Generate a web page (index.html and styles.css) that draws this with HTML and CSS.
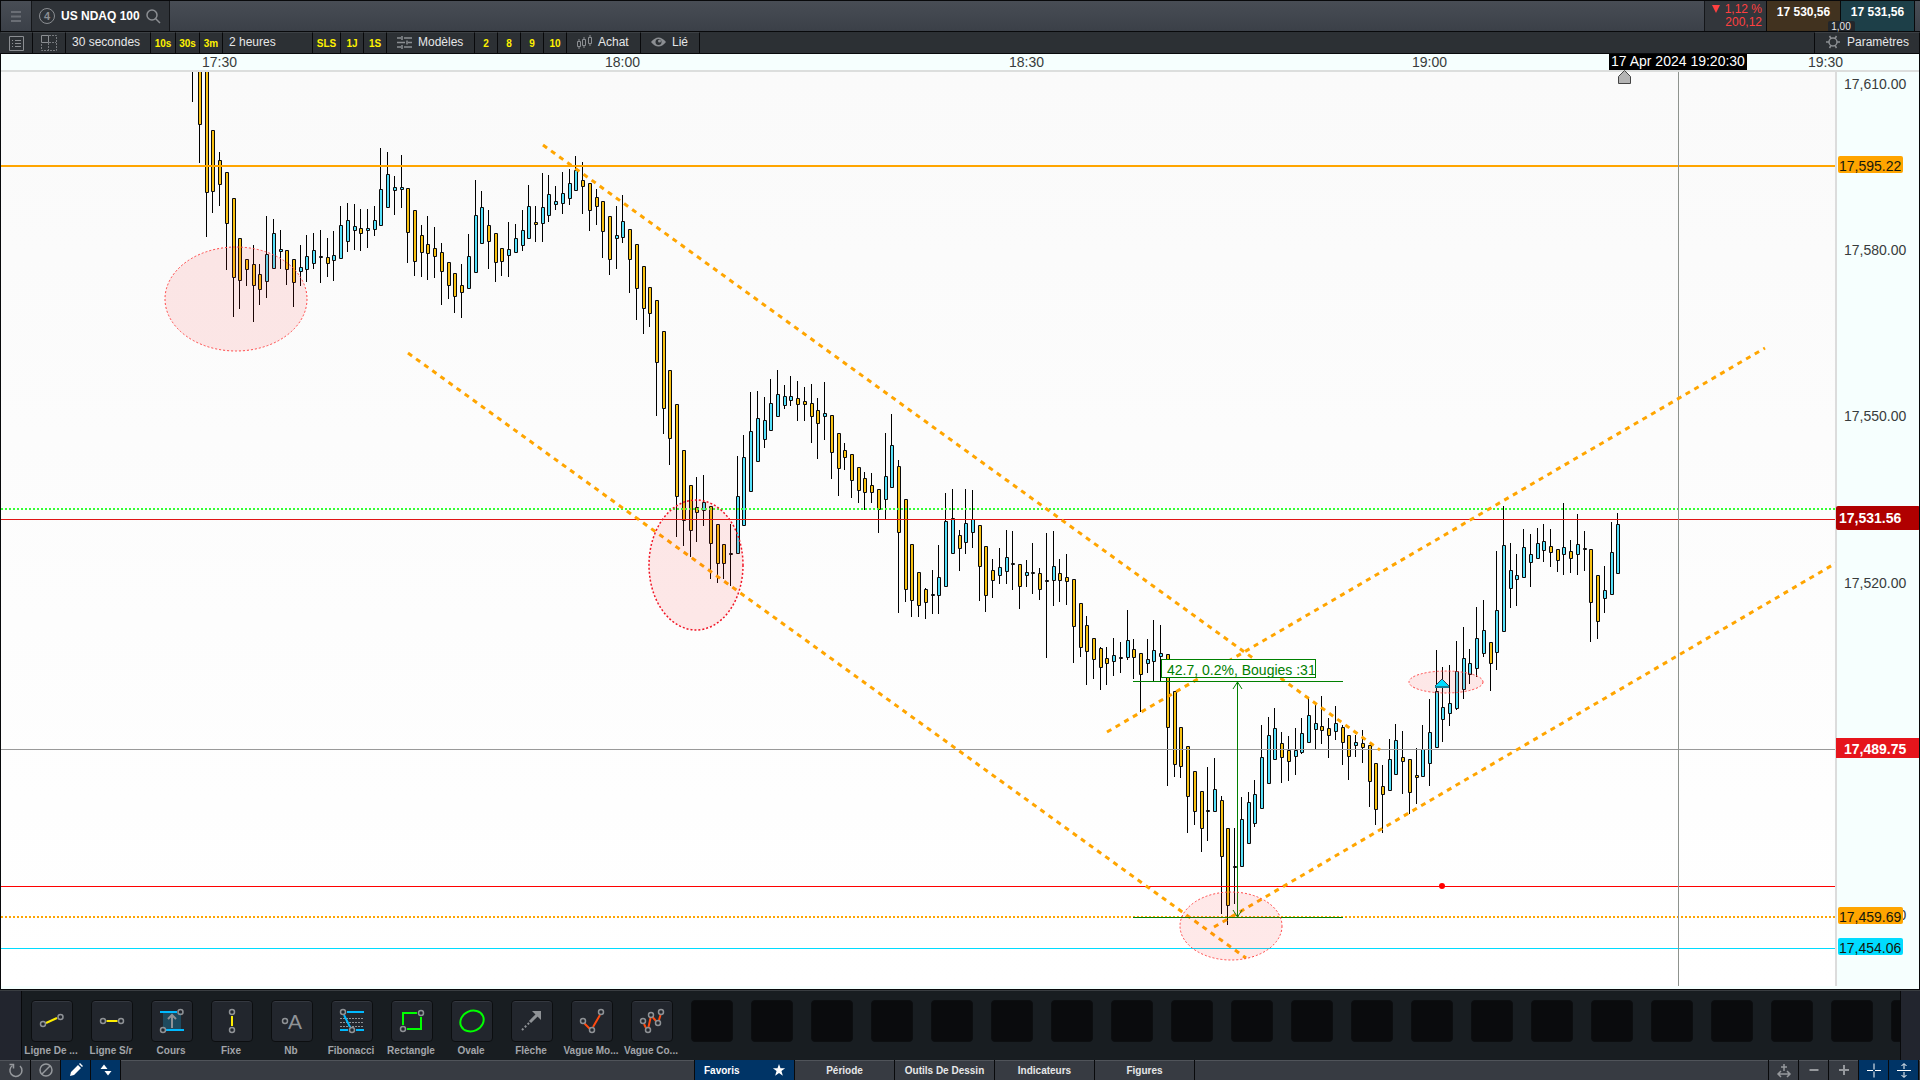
FILE: index.html
```html
<!DOCTYPE html>
<html lang="fr">

<head>
    <meta charset="UTF-8">
    <title>US NDAQ 100</title>
    <link rel="stylesheet" href="styles.css">
</head>

<body>
    <header class='topbar'>
        <button class='menu' aria-label='Menu'>
            <svg width="10" height="11" viewBox="0 0 10 11"><path d="M0 1h10M0 5.500h10M0 10h10" stroke="#6a6e75" stroke-width="2" /></svg>
        </button>
        <button class='symbol'>
            <svg width="16" height="16" viewBox="0 0 16 16">
                <circle cx="8" cy="8" r="7.500" fill="none" stroke="#8b8e92" />
                <text x="8" y="12" text-anchor="middle" class='symbol-num'>4</text>
            </svg>
            <span>US NDAQ 100</span>
            <svg width="15" height="15" viewBox="0 0 15 15" fill="none" stroke="#8b8e92" stroke-width="1.500"><circle cx="6" cy="6" r="5" /><path d="M9.500 9.500L14 14" /></svg>
        </button>
        <div class='spacer'></div>
        <div class='change'>
            <span><span class='tri'></span>1,12 %</span>
            <span>200,12</span>
        </div>
        <div class='quotes'>
            <button class='quote sell'>17 530,56</button>
            <button class='quote buy'>17 531,56</button>
            <span class='spread'>1,00</span>
        </div>
    </header>

    <nav class='toolbar'>
        <button class='ic w32' aria-label='Liste'>
            <svg width="15" height="15" viewBox="0 0 15 15" fill="none" stroke="#8b8e92"><path d="M.5.500h14v14h-14z" /><path d="M3 4.500h1M6 4.500h6M3 7.500h1M6 7.500h6M3 10.500h1M6 10.500h6" /></svg>
        </button>
        <button class='ic w33' aria-label='Disposition'>
            <svg width="16" height="16" viewBox="0 0 16 16" fill="none" stroke="#8b8e92"><path d="M.5.500h7v7h-7z" /><path d="M8 .5h7.500v15H.5V8M7.500 8v7M8 7.500h7" stroke-dasharray="2 1" stroke="#777a7e" /></svg>
        </button>
        <button class='period w85'>30 secondes</button>
        <button class='hot w25'>10s</button>
        <button class='hot w24'>30s</button>
        <button class='hot w23'>3m</button>
        <button class='period w90'>2 heures</button>
        <button class='hot w28'>SLS</button>
        <button class='hot w23'>1J</button>
        <button class='hot w23'>1S</button>
        <button class='w88'>
            <svg width="15" height="13" viewBox="0 0 15 13" stroke="#8b8e92" stroke-width="1.500"><path d="M0 2h4M7 2h8M0 6.500h8M11 6.500h4M0 11h4M7 11h8M5 0v4M10 4.500v4M5 9v4" /></svg>
            Modèles
        </button>
        <button class='hot w23'>2</button>
        <button class='hot w23'>8</button>
        <button class='hot w23'>9</button>
        <button class='hot w23'>10</button>
        <button class='w74'>
            <svg width="15" height="14" viewBox="0 0 15 14" fill="none" stroke="#8b8e92"><path d="M.5 6.500h3v5h-3zM5.500 4.500h3v6h-3zM11.500 2.500h3v6h-3zM2 4v2M2 12v2M7 2v2M7 11v2M13 0v2M13 9v2" /></svg>
            Achat
        </button>
        <button class='w59'>
            <svg width="15" height="10" viewBox="0 0 15 10"><path d="M0 5Q7.500-4 15 5Q7.500 14 0 5z" fill="#8b8e92" /><circle cx="7.500" cy="5" r="3" fill="#2c3034" /><circle cx="8.500" cy="4" r="1.500" fill="#8b8e92" /></svg>
            Lié
        </button>
        <div class='spacer'></div>
        <button class='settings'>
            <svg width="14" height="14" viewBox="0 0 14 14" fill="none" stroke="#8b8e92" stroke-width="1.500"><circle cx="7" cy="7" r="4" /><path d="M11 7h3M0 7h3M9 3.500L10.500 1M5 3.500L3.500 1M9 10.500l1.500 2.500M5 10.500L3.500 13" /></svg>
            Paramètres
        </button>
    </nav>

    <main class='chart'>
        <svg viewBox="0 54 1920 935">
            <defs>
                <linearGradient id="sky" x1="0" y1="0" x2="0" y2="1">
                    <stop offset="0" stop-color="#fafafa" />
                    <stop offset="1" stop-color="#ffffff" />
                </linearGradient>
                <clipPath id="plot"><rect x="0" y="72" width="1835" height="914" /></clipPath>
            </defs>
            <rect x="0" y="54" width="1920" height="935" fill="#f6fffe" />
            <rect x="0" y="72" width="1835" height="914" fill="url(#sky)" />
            <rect x="0" y="70" width="1920" height="2" fill="#dcdedd" />
            <rect x="1835" y="72" width="2" height="914" fill="#dcdcdc" />

            <!-- time axis -->
            <g class='axis'>
                <text x="202" y="67">17:30</text>
                <text x="605" y="67">18:00</text>
                <text x="1009" y="67">18:30</text>
                <text x="1412" y="67">19:00</text>
                <text x="1808" y="67">19:30</text>
            </g>

            <!-- price axis -->
            <g class='axis'>
                <text x="1844" y="89">17,610.00</text>
                <text x="1844" y="255">17,580.00</text>
                <text x="1844" y="421">17,550.00</text>
                <text x="1844" y="588">17,520.00</text>
                <text x="1844" y="920">17,460.00</text>
            </g>

            <g clip-path="url(#plot)">
                <g id="candles"></g>

                <!-- levels -->
                <rect x="0" y="165" width="1836" height="2" fill="orange" />
                <line x1="1" y1="509" x2="1836" y2="509" class='dots' stroke="#33ff33" />
                <rect x="0" y="519" width="1836" height="1" fill="#e01515" />
                <rect x="0" y="749" width="1836" height="1" fill="#999" />
                <rect x="0" y="886" width="1836" height="1" fill="#f00" />
                <circle cx="1442" cy="886" r="3" fill="#f00" />
                <line x1="1" y1="917" x2="1836" y2="917" class='dots' stroke="orange" />
                <rect x="0" y="948" width="1836" height="1" fill="#00dcff" />
                <rect x="1678" y="72" width="1" height="914" fill="#8e938e" />

                <!-- channels -->
                <g class='trend'>
                    <path d="M543 145L1380 750" />
                    <path d="M408 353L1246 958" />
                    <path d="M1107 732L1765 348" />
                    <path d="M1214 927L1836 563" />
                </g>

                <!-- measure -->
                <g class='measure'>
                    <path d="M1133 681.500h210M1133 917.500h210M1237.500 682v235" />
                    <path d="M1233 689l4.500-7 4.500 7M1233 910l4.500 7 4.500-7" />
                    <rect x="1161.500" y="659.500" width="154" height="18" />
                    <text x="1167" y="675">42.7, 0.2%, Bougies :31</text>
                </g>

                <g class='zone'>
                    <ellipse cx="236" cy="299" rx="71" ry="52" />
                    <ellipse cx="696" cy="565" rx="47" ry="65" class='strong' />
                    <ellipse cx="1231" cy="926" rx="51" ry="34" />
                    <ellipse cx="1446" cy="682" rx="37" ry="11" />
                </g>

                <path d="M1442 679l6.500 6.500v2h-13v-2z" fill="#00dcff" />
                <path d="M1435 686l7-7 7 7" fill="none" stroke="#345" />
                <rect x="1435" y="686" width="14" height="2" fill="#147d96" />
            </g>

            <path d="M1624.500 70.500l6 6v7h-12v-7z" fill="#b4b4b4" stroke="#444" />
            <rect x="1609" y="54" width="138" height="16" fill="#000" />
            <text x="1611" y="66" class='now'>17 Apr 2024 19:20:30</text>

            <!-- price tags -->
            <g class='tags'>
                <rect x="1838" y="156" width="65" height="17" rx="2" fill="orange" />
                <text x="1839" y="171">17,595.22</text>
                <rect x="1838" y="907" width="65" height="17" rx="2" fill="orange" />
                <text x="1839" y="922">17,459.69</text>
                <rect x="1838" y="938" width="65" height="17" rx="2" fill="#00dcff" />
                <text x="1839" y="953">17,454.06</text>
                <rect x="1836" y="506" width="84" height="24" rx="2" fill="#b00000" />
                <text x="1839" y="523" class='live'>17,531.56</text>
                <rect x="1836" y="738" width="84" height="20" fill="#e6151c" />
                <text x="1844" y="754" class='live'>17,489.75</text>
            </g>
        </svg>
    </main>

    <section class='tools'>
        <div class='grip left'></div>
        <div class='list' id='list'>
            <div class='tool'>
                <button id='t1'><svg viewBox="0 0 42 42"><path class='y' d="M15 23l11-5" /><circle cx="12" cy="24" r="2.500" /><circle cx="29.500" cy="17" r="2.500" /></svg></button>
                <label for='t1'>Ligne De ...</label>
            </div>
            <div class='tool'>
                <button id='t2'><svg viewBox="0 0 42 42"><path class='y' d="M15.500 21h11" /><circle cx="12" cy="21" r="2.500" /><circle cx="30" cy="21" r="2.500" /></svg></button>
                <label for='t2'>Ligne S/r</label>
            </div>
            <div class='tool'>
                <button id='t3'><svg viewBox="0 0 42 42"><path d="M12 13h18v16H12z" fill="#1e4a5e" stroke="none" /><path class='b' d="M9 12h17M15 30h18" /><circle cx="29.500" cy="12" r="2.500" /><circle cx="12" cy="30" r="2.500" /><path d="M21 28V15M17 19l4-4 4 4" stroke-width="2" /></svg></button>
                <label for='t3'>Cours</label>
            </div>
            <div class='tool'>
                <button id='t4'><svg viewBox="0 0 42 42"><path class='y' d="M21 16v10" /><circle cx="21" cy="12" r="2.500" /><circle cx="21" cy="30" r="2.500" /></svg></button>
                <label for='t4'>Fixe</label>
            </div>
            <div class='tool'>
                <button id='t5'><svg viewBox="0 0 42 42"><circle cx="14" cy="21" r="2.500" /><text x="17" y="29">A</text></svg></button>
                <label for='t5'>Nb</label>
            </div>
            <div class='tool'>
                <button id='t6'><svg viewBox="0 0 42 42"><path d="M9 18.500h24M9 22.500h24M9 26.500h24" stroke-width="1" stroke-dasharray="2 1" /><path class='b' d="M16 12h17M9 30h8M25 30h8M13 15l6 12" /><circle cx="12" cy="12" r="2.500" /><circle cx="21" cy="30" r="2.500" /></svg></button>
                <label for='t6'>Fibonacci</label>
            </div>
            <div class='tool'>
                <button id='t7'><svg viewBox="0 0 42 42"><path class='g' d="M26 13H12v12M16 29h14V17" /><circle cx="30" cy="13" r="2.500" /><circle cx="12" cy="29" r="2.500" /></svg></button>
                <label for='t7'>Rectangle</label>
            </div>
            <div class='tool'>
                <button id='t8'><svg viewBox="0 0 42 42"><ellipse class='g' cx="21" cy="21" rx="12" ry="10" transform="rotate(-25 21 21)" /></svg></button>
                <label for='t8'>Ovale</label>
            </div>
            <div class='tool'>
                <button id='t9'><svg viewBox="0 0 42 42"><path d="M11 30l8-8" stroke-width="2" stroke-dasharray="2 2" /><path d="M19 22l9-9" stroke-width="3" /><path d="M21 11h9v9z" fill="#8f9296" stroke="none" /></svg></button>
                <label for='t9'>Flèche</label>
            </div>
            <div class='tool'>
                <button id='t10'><svg viewBox="0 0 42 42"><path class='r' d="M13.500 23.500l5 5M22 27l7-12" /><circle cx="12" cy="21" r="2.500" /><circle cx="21" cy="30" r="2.500" /><circle cx="30" cy="12" r="2.500" /></svg></button>
                <label for='t10'>Vague Mo...</label>
            </div>
            <div class='tool'>
                <button id='t11'><svg viewBox="0 0 42 42"><path class='r' d="M13 24l2 4M17.500 27l2-9M21.500 17l3.500 4M28 20l1.500-5" /><circle cx="12" cy="21" r="2.500" /><circle cx="17" cy="30" r="2.500" /><circle cx="20" cy="15" r="2.500" /><circle cx="27" cy="23" r="2.500" /><circle cx="30" cy="12" r="2.500" /></svg></button>
                <label for='t11'>Vague Co...</label>
            </div>
        </div>
        <div class='grip right'></div>
    </section>

    <footer class='bottombar'>
        <button class='sq' aria-label='Rétablir'><svg viewBox="0 0 16 16"><path d="M4.500 3.500a6 6 0 1 0 7.500.5" /><path d="M1.500 2.500h4v4" /></svg></button>
        <button class='sq' aria-label='Effacer'><svg viewBox="0 0 16 16"><circle cx="8" cy="8" r="6" /><path d="M4 12L12 4" /></svg></button>
        <button class='sq on' aria-label='Dessiner'><svg viewBox="0 0 16 16"><path d="M2 14l1-4 7-7 3 3-7 7zM11 2l1-1 3 3-1 1z" fill="#fff" stroke="none" /></svg></button>
        <button class='sq on' aria-label='Déplacer'><svg viewBox="0 0 16 16"><path d="M2.500 7L6 2.500 9.500 7zM6.500 9h7L10 13.500z" fill="#fff" stroke="none" /></svg></button>
        <div class='spacer'></div>
        <button class='tab on'>Favoris<svg viewBox="0 0 16 16"><path d="M8 1l1.700 5H15l-4.200 3.200L12.400 14.500 8 11.300 3.600 14.500 5.200 9.200 1 6h5.300z" fill="#fff" /></svg></button>
        <button class='tab'>Période</button>
        <button class='tab'>Outils De Dessin</button>
        <button class='tab'>Indicateurs</button>
        <button class='tab last'>Figures</button>
        <div class='spacer'></div>
        <button class='sq' aria-label='Ajuster'><svg viewBox="0 0 16 16"><path d="M8 2v7M5 5h6M3 12h10M5 9l-3 3 3 3M11 9l3 3-3 3" /></svg></button>
        <button class='sq' aria-label='Zoom arrière'><svg viewBox="0 0 16 16"><path d="M3.500 8h9" stroke-width="2" /></svg></button>
        <button class='sq' aria-label='Zoom avant'><svg viewBox="0 0 16 16"><path d="M3 8h10M8 3v10" stroke-width="2" /></svg></button>
        <button class='sq on' aria-label='Réticule'><svg viewBox="0 0 16 16"><path d="M1 8.500h6M9 8.500h6M8 1.500v6M8 9.500v6" /></svg></button>
        <button class='sq on' aria-label='Hauteur'><svg viewBox="0 0 16 16"><path d="M1 8.500h14M8 2v5M8 10v5M5.500 4L8 1.500 10.500 4M5.500 13l2.500 2.500 2.500-2.500" /></svg></button>
    </footer>

    <script src="chart.js"></script>
</body>

</html>
```
FILE: styles.css
```css
html,
body {
    padding: 0;
    margin: 0;
}

body {
    min-height: 100vh;
    display: flex;
    flex-direction: column;
    background: #08090b;
    font: 12px "Liberation Sans", Arial, sans-serif;
    color: #e6e7e8;
    user-select: none;
}

button {
    display: flex;
    align-items: center;
    box-sizing: border-box;
    margin: 0;
    padding: 0;
    border: 0;
    background: none;
    color: inherit;
    font: inherit;
    white-space: nowrap;
}

.spacer {
    flex: 1;
}

/* top bar */
.topbar {
    display: flex;
    height: 31px;
    box-sizing: border-box;
    margin-bottom: 1px;
    border-top: 1px solid #08090b;
    border-left: 1px solid #08090b;
    background: linear-gradient(#484d55, #3b4048);
}

.menu {
    width: 31px;
    justify-content: center;
    border-right: 1px solid #15171a;
}

.symbol {
    width: 138px;
    gap: 6px;
    padding-left: 7px;
    border-right: 1px solid #15171a;
    background: #2f3338;
    font-weight: bold;
    color: #fff;
}

.symbol-num {
    font: bold 11px "Liberation Sans", Arial, sans-serif;
    fill: #8b8e92;
}

.change {
    width: 62px;
    box-sizing: border-box;
    padding-top: 2px;
    padding-right: 4px;
    border-left: 1px solid #15171a;
    background: #32363b;
    color: #ff4040;
    font-size: 12px;
    line-height: 13px;
    text-align: right;
}

.change > span {
    display: block;
}

.tri {
    display: inline-block;
    margin-right: 5px;
    border: 4px solid transparent;
    border-top: 8px solid #ff4040;
    border-bottom: 0;
}

.quotes {
    display: flex;
    gap: 1px;
    position: relative;
    margin-right: 5px;
    background: #08090b;
    border-left: 1px solid #08090b;
    border-right: 1px solid #08090b;
}

.quote {
    width: 73px;
    padding-bottom: 8px;
    justify-content: center;
    font-weight: bold;
    color: #fff;
}

.sell {
    background: #41321f;
}

.buy {
    background: #1d3f48;
}

.spread {
    position: absolute;
    left: 50%;
    bottom: 0;
    width: 27px;
    height: 10px;
    margin-left: -13px;
    border-radius: 2px 2px 0 0;
    background: #22262b;
    font-size: 10px;
    line-height: 11px;
    text-align: center;
}

/* toolbar */
.toolbar {
    display: flex;
    height: 22px;
    box-sizing: border-box;
    padding-left: 1px;
    border-bottom: 1px solid #08090b;
    background: #2c3034;
}

.toolbar button {
    gap: 6px;
    padding-left: 8px;
    padding-bottom: 2px;
    border-right: 1px solid #08090b;
    border-top: 1px solid #3c4044;
}

.toolbar .ic,
.toolbar .hot {
    justify-content: center;
    padding: 0;
}

.toolbar .period {
    padding-left: 6px;
}

.toolbar .hot {
    font-size: 10px;
    font-weight: bold;
    color: #fff200;
}

.w23 { width: 23px; }
.w24 { width: 24px; }
.w25 { width: 25px; }
.w28 { width: 28px; }
.w32 { width: 32px; }
.w33 { width: 33px; }
.w59 { width: 59px; }
.w74 { width: 74px; }
.w85 { width: 85px; }
.w88 { width: 88px; }
.w90 { width: 90px; }

.toolbar .w88,
.toolbar .w74,
.toolbar .w59 {
    padding-left: 10px;
}

.toolbar .settings {
    width: 106px;
    gap: 7px;
    padding-left: 11px;
    border-left: 1px solid #08090b;
}

/* chart */
.chart {
    flex: 1;
    border-left: 1px solid #08090b;
    border-right: 1px solid #08090b;
    overflow: hidden;
}

.chart svg {
    display: block;
    width: calc(100% + 2px);
    margin-left: -1px;
    font: 14px "Liberation Sans", Arial, sans-serif;
}

.axis text {
    fill: #383c3c;
}

.tags text {
    fill: #14180c;
}

.now {
    fill: #fff;
}

.tags .live {
    fill: #fff;
    font-weight: bold;
}

.dots {
    stroke-width: 2;
    stroke-dasharray: 2 2;
}

.trend path {
    fill: none;
    stroke: orange;
    stroke-width: 3;
    stroke-dasharray: 5 5;
}

.measure path,
.measure rect {
    fill: none;
    stroke: #008000;
}

.measure rect {
    fill: #fff;
}

.measure text {
    fill: #008000;
}

.zone ellipse {
    fill: rgba(255, 40, 40, .1);
    stroke: #ff4545;
    stroke-dasharray: 2 2;
}

.zone .strong {
    stroke: #f01525;
    stroke-width: 1.5;
}

.wick {
    fill: #000;
}

.body {
    fill: #0a0a0a;
}

.up {
    fill: #55e0fa;
}

.down {
    fill: #f7c012;
}

/* drawing tools */
.tools {
    display: flex;
    height: 71px;
    box-sizing: border-box;
    border-top: 1px solid #08090b;
    background: #181d21;
    box-shadow: inset 0 1px #3a3e42;
}

.grip {
    margin-top: 1px;
    background: #22252e;
}

.left {
    width: 21px;
    border-right: 1px solid #08090b;
}

.right {
    width: 19px;
    border-left: 1px solid #08090b;
}

.list {
    display: flex;
    flex: 1;
    overflow: hidden;
}

.tool {
    display: flex;
    flex: none;
    flex-direction: column;
    align-items: center;
    width: 60px;
    padding-top: 10px;
}

.tool button,
.slot {
    width: 42px;
    height: 42px;
    box-sizing: border-box;
    border: 1px solid #0c0e10;
    border-radius: 4px;
    background: #22262d;
}

.tool button {
    box-shadow: inset 0 1px #343840;
}

.slot {
    background: #0a0b0d;
}

.tool svg {
    width: 42px;
    height: 42px;
    margin: -1px;
    fill: none;
    stroke: #8f9296;
    stroke-width: 1.5;
}

.tool svg text {
    font-size: 21px;
    fill: #8f9296;
    stroke: none;
}

.tool label {
    margin-top: 3px;
    padding-right: 2px;
    font-size: 10px;
    font-weight: bold;
    line-height: 12px;
    white-space: nowrap;
    color: #a2a5aa;
}

.tool .y { stroke: #ffee00; stroke-width: 2; }
.tool .b { stroke: #00b9ff; stroke-width: 2; }
.tool .g { stroke: #00ff00; stroke-width: 2; }
.tool .r { stroke: #ff4a10; stroke-width: 2; }

/* bottom bar */
.bottombar {
    display: flex;
    height: 20px;
    background: #373b42;
    box-shadow: inset 0 1px #50545a;
    padding: 0 1px;
}

.sq {
    width: 30px;
    justify-content: center;
    border-right: 1px solid #08090b;
}

.sq svg {
    width: 16px;
    height: 16px;
    fill: none;
    stroke: #96999d;
    stroke-width: 1.5;
}

.sq.on svg {
    stroke: #fff;
    stroke-width: 1;
}

.on {
    background: #003466;
    color: #fff;
}

.tab {
    width: 100px;
    justify-content: center;
    border-left: 1px solid #08090b;
    font-size: 10px;
    font-weight: bold;
}

.tab.on {
    justify-content: space-between;
    padding: 0 8px 0 9px;
}

.tab.last {
    width: 101px;
    border-right: 1px solid #08090b;
}

.tab svg {
    width: 14px;
    height: 14px;
}

.spacer + .sq {
    border-left: 1px solid #08090b;
    width: 31px;
}
```
FILE: chart.js
```js
// high, body top, body bottom, low, direction (u: up, d: down)
const candles = `
71 60 60 102 d,71 60 125 163 d,71 60 193 237 d,130 130 192 213 d,152 160 185 206 d,172 172 224 270 d,198 198 278 317 d,238 238 281 309 d
259 259 270 286 d,245 264 286 322 d,264 274 290 305 d,216 254 282 298 u,219 233 269 269 u,230 249 252 269 u,250 250 270 285 d,259 259 283 307 d
245 267 272 286 u,235 256 270 282 u,233 250 264 269 u,230 256 258 283 u,238 257 264 277 d,231 255 261 281 u,206 225 259 259 u,203 220 242 252 u
204 226 231 250 u,209 228 234 251 d,209 228 231 248 u,206 220 230 236 u,148 189 226 226 u,152 174 208 208 u,176 187 191 215 u,155 187 190 208 u
188 188 233 263 d,210 210 262 276 d,225 235 253 277 d,216 244 254 280 d,227 248 257 278 d,243 252 272 305 d,262 262 286 299 d,273 273 297 313 d
264 285 293 318 d,234 256 289 289 u,180 215 273 273 u,191 207 244 244 u,210 225 242 269 d,233 233 263 282 d,248 248 262 276 d,222 249 256 277 u
224 238 253 253 u,210 230 246 251 u,185 206 239 239 u,206 222 225 242 d,173 207 224 242 u,175 194 216 222 u,186 201 205 210 u,172 193 204 214 u
169 183 199 205 u,156 170 191 191 u,162 180 187 214 d,183 183 211 231 d,189 197 207 225 d,201 201 232 258 d,216 216 260 275 d,206 235 239 269 u
195 221 238 243 u,229 229 260 293 d,244 244 289 320 d,266 266 309 334 d,287 287 314 327 d,300 300 363 416 d,331 331 409 434 d,370 370 439 465 d
404 404 497 537 d,450 450 521 546 d,485 485 531 557 d,477 507 513 542 d,475 502 511 526 u,506 506 544 579 d,524 524 564 583 d,544 544 564 579 d
524 553 555 586 u,456 496 554 554 u,435 457 526 526 u,392 431 492 492 u,391 418 462 462 u,397 420 440 448 u,379 403 431 431 u,370 394 417 417 u
385 396 406 409 u,376 396 401 406 u,381 398 405 421 d,387 401 405 421 d,384 403 417 443 d,398 410 424 459 d,382 413 417 440 u,415 415 453 479 d
433 433 469 496 d,443 450 458 470 d,454 454 481 498 d,467 467 491 503 d,472 478 493 510 d,473 485 493 503 d,489 489 510 533 d,433 476 500 519 u
414 445 488 488 u,460 466 533 613 d,499 499 590 602 d,544 544 601 617 d,572 572 606 617 d,588 589 603 619 d,570 594 596 614 u,545 577 596 614 u
493 521 587 587 u,489 518 554 554 u,530 535 549 571 d,489 523 543 554 u,490 519 533 548 u,525 525 567 601 d,546 546 596 612 d,559 570 581 598 d
548 567 576 584 u,530 557 572 584 u,531 563 565 590 u,564 564 587 609 d,560 572 576 587 u,543 572 574 594 u,568 573 590 600 d,533 580 582 658 u
531 566 581 606 u,559 573 581 602 d,554 577 582 605 d,579 579 627 663 d,603 603 648 657 d,616 625 652 685 d,638 638 660 679 d,647 648 668 690 d
647 658 664 685 d,638 655 662 676 u,642 657 659 673 u,610 640 658 660 u,639 649 658 679 d,653 653 675 712 d,639 659 664 673 u,620 650 662 681 u
625 653 657 681 u,654 654 728 786 d,691 691 765 777 d,727 727 767 778 d,746 746 797 833 d,771 771 812 825 d,791 791 829 852 d,767 810 812 841 u
758 789 812 812 u,796 800 857 914 d,828 828 906 925 d,828 866 868 904 u,797 819 867 867 u,792 802 844 844 u,780 794 824 827 u,725 757 809 809 u
717 735 784 784 u,708 728 760 760 u,732 743 758 783 d,736 750 762 781 d,728 750 757 775 u,718 733 753 754 u,698 715 743 743 u,705 723 730 749 u
696 726 731 744 d,718 728 736 758 d,706 723 732 740 u,725 727 743 765 d,735 735 757 780 d,735 742 746 757 u,730 743 748 763 d,745 745 782 807 d
763 763 810 825 d,765 786 795 833 d,739 759 791 791 u,724 740 775 775 u,731 757 762 794 d,759 759 793 814 d,748 775 778 804 d,725 749 777 777 u
699 732 764 786 u,650 691 748 748 u,667 707 720 742 u,665 703 714 726 u,641 671 709 710 u,627 658 690 699 u,649 663 675 684 u,607 638 669 677 u
600 630 654 657 u,642 642 664 691 d,551 610 653 670 u,506 545 632 632 u,543 570 589 608 u,554 575 580 606 u,529 547 578 578 u,534 554 563 587 u
528 543 559 559 u,524 541 551 562 u,529 546 553 567 d,549 549 561 572 d,503 547 555 575 u,540 551 559 573 d,514 544 555 575 u,531 548 550 571 u
549 549 603 642 d,575 575 622 639 d,566 590 599 613 u,522 552 595 595 u,513 524 574 574 u
`.trim().split(/[,\n]/).map(row => row.split(' '));

const svgNS = 'http://www.w3.org/2000/svg';
const group = document.getElementById('candles');

function rect(x, y, width, height, name) {
    let el = document.createElementNS(svgNS, 'rect');
    el.setAttribute('x', x);
    el.setAttribute('y', y);
    el.setAttribute('width', width);
    el.setAttribute('height', height);
    el.setAttribute('class', name);
    if (name === 'body') {
        el.setAttribute('rx', 1);
    }
    group.appendChild(el);
}

candles.forEach((row, i) => {
    let [high, top, bottom, low] = row.slice(0, 4).map(Number);
    let x = Math.floor(192.7 + i * 6.722);
    rect(x, high, 1, low - high, 'wick');
    if (bottom > top) {
        rect(x - 1, top, 4, bottom - top, 'body');
    }
    if (bottom - top > 2) {
        rect(x, top + 1, 2, bottom - top - 2, row[4] === 'u' ? 'up' : 'down');
    }
});

// unused favourite slots
const list = document.getElementById('list');
for (let i = 0; i < 21; i++) {
    let tool = document.createElement('div');
    tool.className = 'tool';
    tool.innerHTML = "<div class='slot'></div>";
    list.appendChild(tool);
}
```
